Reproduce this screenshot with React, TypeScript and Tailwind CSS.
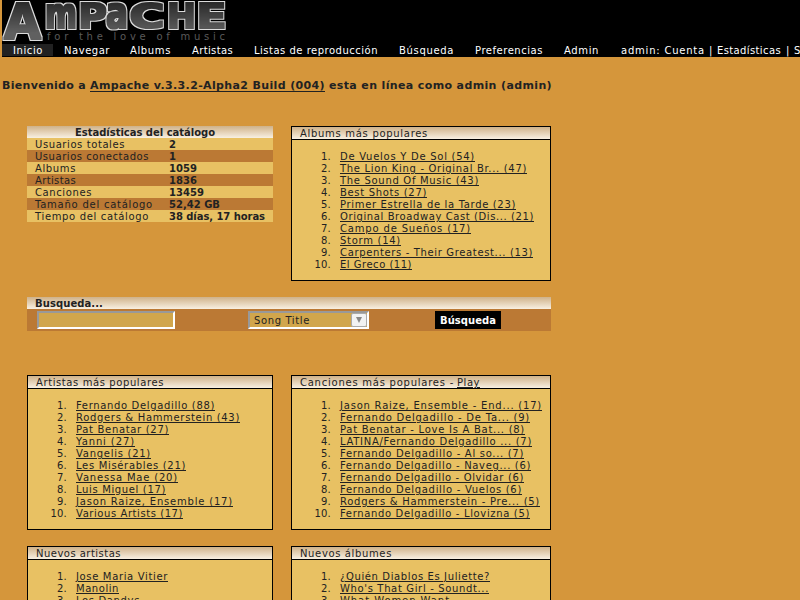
import React from "react";

type Item = [text: string, width: number];

const albums: Item[] = [
  ["De Vuelos Y De Sol (54)", 135],
  ["The Lion King - Original Br... (47)", 187],
  ["The Sound Of Music (43)", 139],
  ["Best Shots (27)", 87],
  ["Primer Estrella de la Tarde (23)", 176],
  ["Original Broadway Cast (Dis... (21)", 194],
  ["Campo de Sueños (17)", 131],
  ["Storm (14)", 61],
  ["Carpenters - Their Greatest... (13)", 193],
  ["El Greco (11)", 72],
];

const artists: Item[] = [
  ["Fernando Delgadillo (88)", 139],
  ["Rodgers & Hammerstein (43)", 164],
  ["Pat Benatar (27)", 93],
  ["Yanni (27)", 59],
  ["Vangelis (21)", 75],
  ["Les Misérables (21)", 110],
  ["Vanessa Mae (20)", 102],
  ["Luis Miguel (17)", 90],
  ["Jason Raize, Ensemble (17)", 157],
  ["Various Artists (17)", 107],
];

const songs: Item[] = [
  ["Jason Raize, Ensemble - End... (17)", 202],
  ["Fernando Delgadillo - De Ta... (9)", 190],
  ["Pat Benatar - Love Is A Bat... (8)", 185],
  ["LATINA/Fernando Delgadillo ... (7)", 192],
  ["Fernando Delgadillo - Al so... (7)", 184],
  ["Fernando Delgadillo - Naveg... (6)", 191],
  ["Fernando Delgadillo - Olvidar (6)", 184],
  ["Fernando Delgadillo - Vuelos (6)", 182],
  ["Rodgers & Hammerstein - Pre... (5)", 200],
  ["Fernando Delgadillo - Llovizna (5)", 190],
];

const newArtists: Item[] = [["Jose Maria Vitier", 92], ["Manolin", 43], ["Los Dandys", 64]];
const newAlbums: Item[] = [["¿Quién Diablos Es Juliette?", 150], ["Who's That Girl - Soundt...", 149], ["What Women Want", 110]];

const stats: [string, number, string, number][] = [
  ["Usuarios totales", 90, "2", 7],
  ["Usuarios conectados", 114, "1", 7],
  ["Albums", 41, "1059", 28],
  ["Artistas", 41, "1836", 28],
  ["Canciones", 57, "13459", 35],
  ["Tamaño del catálogo", 118, "52,42 GB", 51],
  ["Tiempo del catálogo", 114, "38 días, 17 horas", 96],
];

// Spaces the letters so that the label fills exactly the given width.
function Fit({ children, w, className = "" }: { children: string; w: number; className?: string }) {
  const ref = React.useRef<HTMLSpanElement>(null);
  const [spacing, setSpacing] = React.useState(0);
  React.useLayoutEffect(() => {
    if (ref.current) {
      const natural = ref.current.getBoundingClientRect().width;
      setSpacing((w - natural) / children.length);
    }
  }, []);
  return (
    <span ref={ref} className={"inline-block whitespace-pre " + className} style={{ letterSpacing: spacing }}>
      {children}
    </span>
  );
}

const headBg = "bg-linear-to-b from-[#cfb28a] to-[#f8f0e2]";

function Panel({ title, titleW, link, items, className }: { title: string; titleW: number; link?: string; items: Item[]; className: string }) {
  return (
    <section className={"border border-black bg-[#e8c163] " + className}>
      <h2 className={"flex h-[13px] items-start gap-[3px] border-b border-black pl-2 leading-[14px] " + headBg}>
        <Fit w={titleW}>{title}</Fit>
        {link && <Fit w={23} className="underline underline-offset-1">{link}</Fit>}
      </h2>
      <ol className="pt-[11px]">
        {items.map(([text, w], i) => (
          <li key={i} className="flex h-3 leading-[12px]">
            <span className="mr-[9px] w-[39px] shrink-0 text-right tracking-[0.2px]">{i + 1}.</span>
            <Fit w={w} className="underline underline-offset-1">{text}</Fit>
          </li>
        ))}
      </ol>
    </section>
  );
}

const letters: { c: string; x: number; y: number; w: number; size: number }[] = [
  { c: "A", x: 2, y: 39, w: 37, size: 49 },
  { c: "m", x: 43, y: 28, w: 32, size: 43 },
  { c: "P", x: 76, y: 28, w: 29, size: 34 },
  { c: "a", x: 104, y: 28, w: 22, size: 44 },
  { c: "C", x: 127, y: 28, w: 36, size: 34 },
  { c: "H", x: 165, y: 28, w: 29, size: 34 },
  { c: "E", x: 194, y: 28, w: 31, size: 34 },
];

function Logo() {
  return (
    <svg width="230" height="44" viewBox="0 0 230 44" className="block">
      <defs>
        <linearGradient id="metal" gradientUnits="userSpaceOnUse" x1="0" y1="0" x2="0" y2="34">
          <stop offset="0" stopColor="#242424" />
          <stop offset="1" stopColor="#606060" />
        </linearGradient>
        {/* Square-cornered light rim around a thickened metal body. */}
        <filter id="rim" filterUnits="userSpaceOnUse" x="0" y="0" width="230" height="44" colorInterpolationFilters="sRGB">
          <feMorphology in="SourceAlpha" operator="dilate" radius="2" result="outer" />
          <feFlood floodColor="#dcdcdc" />
          <feComposite in2="outer" operator="in" result="edge" />
          <feMorphology in="SourceGraphic" operator="dilate" radius="1" result="body" />
          <feMerge>
            <feMergeNode in="edge" />
            <feMergeNode in="body" />
          </feMerge>
        </filter>
      </defs>
      {letters.map(({ c, x, y, w, size }) => (
        <text
          key={x}
          x={x}
          y={y}
          textLength={w}
          lengthAdjust="spacingAndGlyphs"
          fontSize={size}
          fontWeight="700"
          fill="url(#metal)"
          filter="url(#rim)"
        >
          {c}
        </text>
      ))}
      <text x="45" y="40" textLength="178" fontSize="10" fill="#5a5a5a">for the love of music</text>
    </svg>
  );
}

const nav: [string, number, number][] = [
  ["Inicio", 13, 30],
  ["Navegar", 64, 46],
  ["Albums", 130, 41],
  ["Artistas", 192, 41],
  ["Listas de reproducción", 254, 124],
  ["Búsqueda", 399, 55],
  ["Preferencias", 475, 68],
  ["Admin", 564, 35],
  ["admin: Cuenta", 621, 84],
  ["|", 709, 3],
  ["Estadísticas", 717, 64],
  ["|", 786, 3],
  ["Salir", 794, 26],
];

export default function App() {
  return (
    <div className="h-[600px] w-[800px] overflow-hidden bg-[#d5963b] font-['DejaVu_Sans',Verdana,sans-serif] text-[10px] leading-[12px] text-[#222]">
      <header className="ml-[2px] h-[57px] overflow-hidden bg-black text-white">
        <Logo />
        <nav className="flex h-[13px] leading-[13px]">
          {nav.map(([label, x, w], i) => {
            const prev = i ? nav[i - 1][1] + nav[i - 1][2] : 2;
            return (
              <a key={x} className={"shrink-0 " + (i === 0 ? "h-3 bg-[#222] pr-[10px]" : "")} style={{ paddingLeft: x - prev - (i === 1 ? 10 : 0) }}>
                <Fit w={w}>{label}</Fit>
              </a>
            );
          })}
        </nav>
      </header>

      <h1 className="mt-[22px] flex h-[15px] gap-1 pl-[2px] text-[11px] leading-[14px] font-bold">
        <Fit w={84}>Bienvenido a</Fit>
        <Fit w={235} className="underline underline-offset-2">Ampache v.3.3.2-Alpha2 Build (004)</Fit>
        <Fit w={223}>esta en línea como admin (admin)</Fit>
      </h1>

      <main className="ml-[27px] w-[524px]">
        <div className="mt-8 flex items-start justify-between">
          <section className="w-[246px] leading-[14px]">
            <h2 className={"flex h-3 justify-center pr-[10px] font-bold " + headBg}>
              <Fit w={140}>Estadísticas del catálogo</Fit>
            </h2>
            {stats.map(([label, lw, value, vw], i) => (
              <div key={label} className={"flex h-3 pl-2 " + (i % 2 ? "bg-[#bb7934]" : "bg-[#e8c163]")}>
                <span className="w-[134px]"><Fit w={lw}>{label}</Fit></span>
                <Fit w={vw} className="font-bold">{value}</Fit>
              </div>
            ))}
          </section>
          <Panel title="Albums más populares" titleW={128} items={albums} className="h-[155px] w-[260px]" />
        </div>

        <section className="mt-4 h-[34px] bg-[#bb7934]">
          <h2 className={"flex h-3 pl-2 leading-[14px] font-bold " + headBg}><Fit w={68}>Busqueda...</Fit></h2>
          <div className="flex pt-[2px] pl-[10px]">
            <div className="h-[18px] w-[138px] border-2 border-t-[#999] border-r-white border-b-white border-l-[#999] bg-[#d1a64c]" />
            <div className="ml-[73px] flex h-[18px] w-[121px] items-center justify-between border-2 border-t-[#999] border-r-white border-b-white border-l-[#999] bg-[#d1a64c] pl-1">
              <Fit w={56} className="pt-[2px]">Song Title</Fit>
              <span className="flex h-[14px] w-4 items-center justify-center rounded-[2px] border border-[#aaa] bg-[#f2f2f2]">
                <svg width="6" height="6" viewBox="0 0 6 6"><path d="M0 0h6L3 6z" fill="#888" /></svg>
              </span>
            </div>
            <button className="ml-[66px] h-[18px] w-[66px] bg-black pt-[2px] pl-[5px] text-left font-bold text-white"><Fit w={56}>Búsqueda</Fit></button>
          </div>
        </section>

        <div className="mt-11 flex justify-between">
          <Panel title="Artistas más populares" titleW={128} items={artists} className="h-[155px] w-[246px]" />
          <Panel title="Canciones más populares -" titleW={154} link="Play" items={songs} className="h-[155px] w-[260px]" />
        </div>
        <div className="mt-4 flex justify-between">
          <Panel title="Nuevos artistas" titleW={85} items={newArtists} className="h-[155px] w-[246px]" />
          <Panel title="Nuevos álbumes" titleW={92} items={newAlbums} className="h-[155px] w-[260px]" />
        </div>
      </main>
    </div>
  );
}
